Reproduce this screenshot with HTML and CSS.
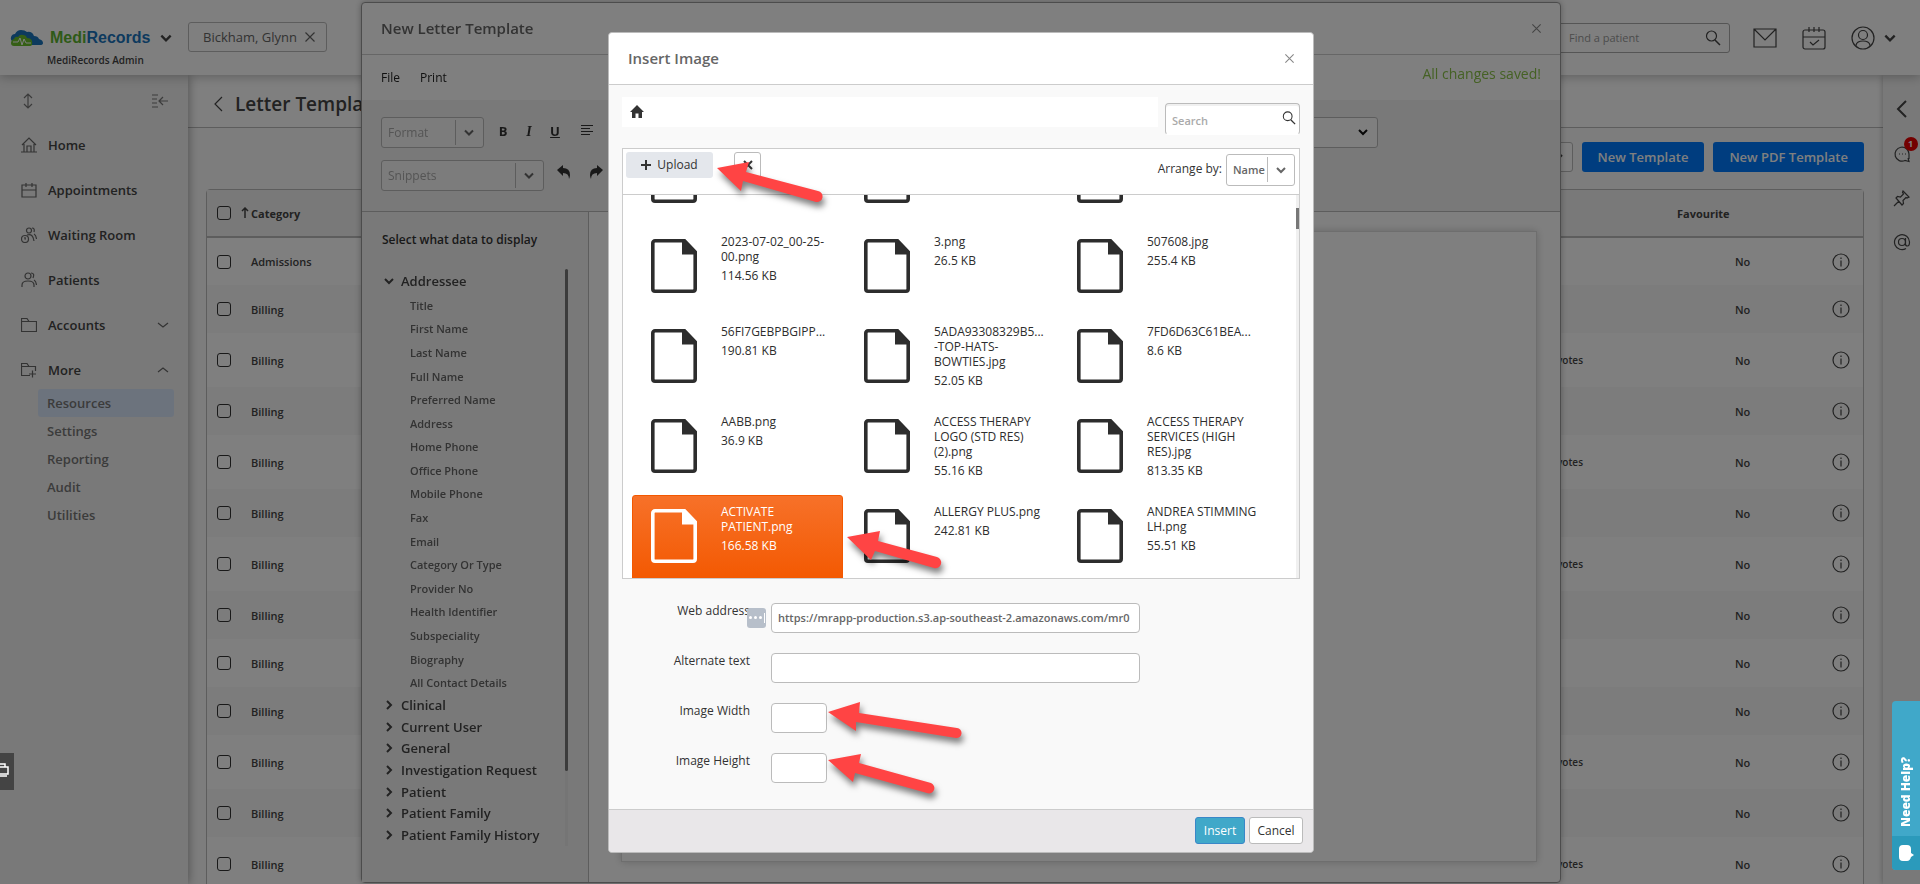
FILE: index.html
```html
<!DOCTYPE html>
<html lang="en">

<head>
  <meta charset="UTF-8">
  <meta name="viewport" content="width=device-width, initial-scale=1.0">
  <title>MediRecords - Letter Templates</title>
  <link rel="stylesheet" href="styles.css">
</head>

<body>
  <!-- shared icons -->
  <svg class="defs" width="0" height="0">
    <symbol id="i-down" viewBox="0 0 12 12"><path d="M2 4l4 4 4-4" fill="none" stroke="currentColor" stroke-width="2"/></symbol>
    <symbol id="i-close" viewBox="0 0 12 12"><path d="M1.500 1.500l9 9M10.500 1.500l-9 9" fill="none" stroke="currentColor" stroke-width="1.200"/></symbol>
    <symbol id="i-info" viewBox="0 0 18 18"><circle cx="9" cy="9" r="8" fill="none" stroke="currentColor" stroke-width="1.200"/><path d="M9 7.500v6M9 4.500v1.500" stroke="currentColor" stroke-width="1.200"/></symbol>
    <symbol id="i-search" viewBox="0 0 16 16"><circle cx="6.500" cy="6" r="5" fill="none" stroke="currentColor" stroke-width="1.200"/><path d="M10 10l5 5" stroke="currentColor" stroke-width="1.500"/></symbol>
    <symbol id="i-file" viewBox="0 0 46 54">
      <path d="M4 1.800h29.500L44.200 13v37a2.200 2.200 0 0 1-2.200 2.200H4A2.200 2.200 0 0 1 1.800 50V4A2.200 2.200 0 0 1 4 1.800z" fill="none" stroke="currentColor" stroke-width="3.600"/>
      <path d="M31 2h3l10 10v3.500H31z" fill="currentColor"/>
    </symbol>
  </svg>

  <header class="header">
    <div class="brand">
      <div class="brand-top">
        <svg class="cloud" width="34" height="18" viewBox="0 0 34 18">
          <path d="M4 13Q0 12 1 8q1-3 4-3Q7 1 11 1q4 0 6 2 5-1 7 4 4 0 5 3 4 1 4 4 0 2-3 2H14z" fill="#1b75bc"/>
          <path d="M4 17q-3 0-3-3t3-4q1-3 4-2 2-3 5-2 3 0 4 3 4 0 5 3 1 5-2 5z" fill="#6abf2a"/>
          <path d="M3 13h5l2-4 2 7 2-6 2 4h5" fill="none" stroke="#fff"/>
        </svg>
        <a href="#" class="logo"><span>Medi</span>Records</a>
        <svg width="14" height="14"><use href="#i-down"/></svg>
      </div>
      <small>MediRecords Admin</small>
    </div>
    <div class="patient-tag">Bickham, Glynn <svg width="12" height="12"><use href="#i-close"/></svg></div>
    <div class="find">
      <input type="text" placeholder="Find a patient" aria-label="Find a patient">
      <svg width="16" height="16"><use href="#i-search"/></svg>
    </div>
    <div class="header-icons">
      <svg width="24" height="20" viewBox="0 0 24 20" class="line"><path d="M1 1h22v18H1zM1 1l11 11L23 1"/></svg>
      <svg width="24" height="24" viewBox="0 0 24 24" class="line"><rect x="1" y="4" width="22" height="19" rx="2"/><path d="M1 11h22M7 1v5M12 1v5M17 1v5M8 16l3 3 6-5"/></svg>
      <span class="user">
        <svg width="24" height="24" viewBox="0 0 24 24" class="line"><circle cx="12" cy="12" r="11"/><circle cx="12" cy="9" r="4.500"/><path d="M5 20v-1q1-4 7-4t7 4v1"/></svg>
        <svg width="14" height="14"><use href="#i-down"/></svg>
      </span>
    </div>
  </header>

  <div class="shell">
    <nav class="sidebar">
      <div class="sidebar-tools">
        <svg width="10" height="16" viewBox="0 0 10 16" class="line"><path d="M5 1v14M1 5l4-4 4 4M1 11l4 4 4-4"/></svg>
        <svg width="16" height="14" viewBox="0 0 16 14" class="line"><path d="M0 1h6M0 5h5M0 9h5M0 13h6M7 7h9M11 3L7 7l4 4"/></svg>
      </div>
      <ul class="menu">
        <li><a href="#"><svg width="16" height="16" viewBox="0 0 16 16" class="line"><path d="M1 8l7-7 7 7M3 7v8M13 7v8M0 15h16M6 15V9h4v6"/></svg>Home</a></li>
        <li><a href="#"><svg width="16" height="16" viewBox="0 0 16 16" class="line"><path d="M1 3h14v12H1zM1 8h14M5 1v4M11 1v4"/></svg>Appointments</a></li>
        <li><a href="#"><svg width="16" height="16" viewBox="0 0 16 16" class="line"><circle cx="8" cy="3.500" r="2.500"/><circle cx="4" cy="12" r="3.500"/><path d="M4 10v2h1M6 8q6-2 7 6M11 1q3 0 2 4M13 7q2 1 2.500 5"/></svg>Waiting Room</a></li>
        <li><a href="#"><svg width="16" height="16" viewBox="0 0 16 16" class="line"><circle cx="7" cy="4" r="3"/><path d="M1 15v-2q0-4 6-4t6 4v2M10 1q4 0 2 5M13 8q2 1 2.500 5"/></svg>Patients</a></li>
        <li><a href="#"><svg width="16" height="16" viewBox="0 0 16 16" class="line"><path d="M.5 14.500V1.500H6l2 3h7.500v10zM1 4.500h7"/></svg>Accounts<svg class="toggle line" width="12" height="12" viewBox="0 0 12 12"><path d="M1 4l5 4 5-4"/></svg></a></li>
        <li><a href="#"><svg width="16" height="16" viewBox="0 0 16 16" class="line"><path d="M9 13.500H.5V1.500H6l2 3h6.500V9M1 4.500h7M11.500 8.500v7M8 12h7"/></svg>More<svg class="toggle line" width="12" height="12" viewBox="0 0 12 12"><path d="M1 8l5-4 5 4"/></svg></a></li>
      </ul>
      <ul class="submenu">
        <li><a href="#" class="active">Resources</a></li>
        <li><a href="#">Settings</a></li>
        <li><a href="#">Reporting</a></li>
        <li><a href="#">Audit</a></li>
        <li><a href="#">Utilities</a></li>
      </ul>
    </nav>

    <main class="main">
      <h1 class="page-title">
        <svg width="10" height="16" viewBox="0 0 10 16" class="line"><path d="M9 1L2 8l7 7"/></svg>
        Letter Templates
      </h1>
      <div class="actions">
        <div class="combo wide">
          <select aria-label="Status"><option>Active</option></select>
          <svg width="12" height="12"><use href="#i-down"/></svg>
        </div>
        <button class="primary">New Template</button>
        <button class="primary">New PDF Template</button>
      </div>
      <div class="grid-box">
        <table class="grid">
          <colgroup>
            <col class="c-check"><col><col class="c-name"><col class="c-fav"><col class="c-info">
          </colgroup>
          <thead>
            <tr>
              <th><input type="checkbox" aria-label="Select all"></th>
              <th class="category"><svg width="8" height="12" viewBox="0 0 8 12"><path d="M4 11V1M1 4l3-3 3 3" fill="none" stroke="currentColor" stroke-width="1.500"/></svg>Category</th>
              <th></th>
              <th>Favourite</th>
              <th></th>
            </tr>
          </thead>
          <tbody id="templates"></tbody>
        </table>
      </div>
    </main>

    <aside class="rail">
      <svg width="12" height="20" viewBox="0 0 12 20" class="line thick"><path d="M10 2l-8 8 8 8"/></svg>
      <span class="chat">
        <svg width="18" height="18" viewBox="0 0 18 18" class="line"><path d="M16 14V9a7 7 0 1 0-4 6.500l4 1-1-3.500M6 9h1M9 9h1M12 9h1"/></svg>
        <b class="badge">1</b>
      </span>
      <svg width="18" height="18" viewBox="0 0 18 18" class="line"><path d="M10 2l6 6-2 1-1-.5-3 3 .5 3-1.500 1.500L3 9l1.500-1.500 3 .5 3-3L9.500 3.500zM6 12l-5 5"/></svg>
      <svg width="18" height="18" viewBox="0 0 18 18" class="line"><circle cx="9" cy="9" r="3.500"/><path d="M12.500 5v6q0 2 2 2t2-4a7.500 7.500 0 1 0-3.500 6.500"/></svg>
    </aside>
  </div>

  <div class="layer">
    <section class="window">
      <div class="window-head">
        <h2>New Letter Template</h2>
        <button class="close" aria-label="Close"><svg width="11" height="11"><use href="#i-close"/></svg></button>
      </div>
      <div class="window-menu">
        <a href="#">File</a>
        <a href="#">Print</a>
        <span class="saved">All changes saved!</span>
      </div>
      <div class="editor-tools">
        <div class="tool-row">
          <div class="combo divided format">
            <select aria-label="Format"><option>Format</option></select>
            <svg width="12" height="12"><use href="#i-down"/></svg>
          </div>
          <button class="tool" aria-label="Bold"><b>B</b></button>
          <button class="tool" aria-label="Italic"><i>I</i></button>
          <button class="tool" aria-label="Underline"><u>U</u></button>
          <button class="tool align" aria-label="Align left"><svg width="12" height="12" viewBox="0 0 12 12" class="line"><path d="M0 1.500h12M0 4.500h9M0 7.500h12M0 10.500h9"/></svg></button>
          <div class="combo wide last">
            <select aria-label="Field"><option></option></select>
            <svg width="12" height="12"><use href="#i-down"/></svg>
          </div>
        </div>
        <div class="tool-row">
          <div class="combo divided snippets">
            <select aria-label="Snippets"><option>Snippets</option></select>
            <svg width="12" height="12"><use href="#i-down"/></svg>
          </div>
          <button class="tool undo" aria-label="Undo"><svg width="14" height="14" viewBox="0 0 14 14"><path d="M0 5l6-5v3q7 0 7 7 0 2-1 4 0-6-6-6v3z" fill="currentColor"/></svg></button>
          <button class="tool" aria-label="Redo"><svg width="14" height="14" viewBox="0 0 14 14"><path d="M14 5L8 0v3q-7 0-7 7 0 2 1 4 0-6 6-6v3z" fill="currentColor"/></svg></button>
        </div>
      </div>
      <div class="window-body">
        <div class="fields">
          <h3>Select what data to display</h3>
          <div class="tree">
            <div class="tree-list">
              <div class="node open"><svg width="12" height="12"><use href="#i-down"/></svg>Addressee</div>
              <ul class="leaves" id="leaves"></ul>
              <div class="groups" id="groups"></div>
            </div>
            <div class="track"><div class="thumb"></div></div>
          </div>
        </div>
        <div class="canvas"><div class="sheet"></div></div>
      </div>
    </section>
  </div>

  <div class="layer shade">
    <section class="dialog" role="dialog" aria-label="Insert Image">
      <div class="dialog-head">
        <h2>Insert Image</h2>
        <button class="close" aria-label="Close"><svg width="11" height="11"><use href="#i-close"/></svg></button>
      </div>
      <div class="dialog-body">
        <div class="browse-top">
          <div class="crumbs"><svg width="14" height="13" viewBox="0 0 14 13"><path d="M7 0l7 7h-2v6H8.500V8.500h-3V13H2V7H0z" fill="currentColor"/></svg></div>
          <div class="search">
            <input type="text" placeholder="Search" aria-label="Search">
            <svg width="14" height="14"><use href="#i-search"/></svg>
          </div>
        </div>
        <div class="browser">
          <div class="browser-tools">
            <button class="upload"><svg width="10" height="10" viewBox="0 0 10 10"><path d="M5 0v10M0 5h10" stroke="currentColor" stroke-width="2"/></svg>Upload</button>
            <button class="delete" aria-label="Delete"><svg width="10" height="10" viewBox="0 0 10 10"><path d="M1 1l8 8M9 1L1 9" stroke="currentColor" stroke-width="2"/></svg></button>
            <label for="arrange">Arrange by:</label>
            <div class="combo divided arrange">
              <select id="arrange"><option>Name</option></select>
              <svg width="12" height="12"><use href="#i-down"/></svg>
            </div>
          </div>
          <div class="browser-list">
            <ul class="files" id="files"></ul>
            <div class="list-track"><div class="list-thumb"></div></div>
          </div>
        </div>
        <form class="form">
          <label for="url">Web address</label>
          <span class="url-box"><i class="filler"><b></b><b></b><b></b><em></em></i><input id="url" type="text" value="https://mrapp-production.s3.ap-southeast-2.amazonaws.com/mr0"></span>
          <label for="alt">Alternate text</label>
          <input id="alt" type="text">
          <label for="w">Image Width</label>
          <input id="w" type="text" class="short">
          <label for="h">Image Height</label>
          <input id="h" type="text" class="short">
        </form>
      </div>
      <div class="dialog-foot">
        <button class="insert">Insert</button>
        <button class="cancel">Cancel</button>
      </div>
      <svg class="pointers" viewBox="608 32 706 821" preserveAspectRatio="xMinYMin">
        <path d="M717 168L749 162L746 172L818 191A5.500 5.500 0 0 1 816 202L743 181L741 191z"/>
        <path d="M847 537L880 531L878 541L937 557A5.500 5.500 0 0 1 934 568L875 551L871 560z"/>
        <path d="M828 712L860 702L859 713L957 728A5 5 0 0 1 956 738L856 722L856 731z"/>
        <path d="M828 760L861 754L859 763L931 783A5 5 0 0 1 927 793L855 773L853 782z"/>
      </svg>
    </section>
  </div>

  <button class="side-tab" aria-label="Print"><svg width="10" height="14" viewBox="0 0 10 14"><path d="M0 1h5v3M0 4h8v7H0M0 13h7" fill="none" stroke="#fff" stroke-width="1.500"/></svg></button>
  <button class="help">
    <span class="help-text">Need Help?</span>
    <span class="help-icon"><svg width="16" height="16" viewBox="0 0 16 16"><path d="M5 0h4q4 0 4 4v4l3 2-3 2q-1 4-4 4H5q-4 0-4-4V4q0-4 4-4z" fill="#fff"/></svg></span>
  </button>

  <script>
    const templates = [
      ["Admissions", ""], ["Billing", ""], ["Billing", "votes"], ["Billing", ""],
      ["Billing", "votes"], ["Billing", ""], ["Billing", "votes"], ["Billing", ""],
      ["Billing", ""], ["Billing", ""], ["Billing", "votes"], ["Billing", ""], ["Billing", "votes"],
    ];
    document.getElementById("templates").innerHTML = templates.map(([category, name]) => `
      <tr class="${name ? "tall" : ""}">
        <td><input type="checkbox" aria-label="Select ${category}"></td>
        <td class="category">${category}</td>
        <td class="name">${name}</td>
        <td class="fav">No</td>
        <td><svg width="18" height="18"><use href="#i-info"/></svg></td>
      </tr>`).join("");

    const leaves = ["Title", "First Name", "Last Name", "Full Name", "Preferred Name", "Address",
      "Home Phone", "Office Phone", "Mobile Phone", "Fax", "Email", "Category Or Type",
      "Provider No", "Health Identifier", "Subspeciality", "Biography", "All Contact Details"];
    document.getElementById("leaves").innerHTML = leaves.map(l => `<li>${l}</li>`).join("");

    const groups = ["Clinical", "Current User", "General", "Investigation Request", "Patient",
      "Patient Family", "Patient Family History"];
    document.getElementById("groups").innerHTML = groups.map(g =>
      `<div class="node"><svg width="12" height="12"><use href="#i-down"/></svg>${g}</div>`).join("");

    // the first row is scrolled mostly out of view
    const files = [
      ["", ""], ["", ""], ["", ""],
      ["2023-07-02_00-25-<br>00.png", "114.56 KB"],
      ["3.png", "26.5 KB"],
      ["507608.jpg", "255.4 KB"],
      ["56FI7GEBPBGIPP...", "190.81 KB"],
      ["5ADA93308329B5...<br>-TOP-HATS-<br>BOWTIES.jpg", "52.05 KB"],
      ["7FD6D63C61BEA...", "8.6 KB"],
      ["AABB.png", "36.9 KB"],
      ["ACCESS THERAPY<br>LOGO (STD RES)<br>(2).png", "55.16 KB"],
      ["ACCESS THERAPY<br>SERVICES (HIGH<br>RES).jpg", "813.35 KB"],
      ["ACTIVATE<br>PATIENT.png", "166.58 KB"],
      ["ALLERGY PLUS.png", "242.81 KB"],
      ["ANDREA STIMMING<br>LH.png", "55.51 KB"],
    ];
    document.getElementById("files").innerHTML = files.map(([name, size]) => `
      <li class="${name.startsWith("ACTIVATE") ? "selected" : ""}">
        <svg width="46" height="54"><use href="#i-file"/></svg>
        <div><strong>${name}</strong><span>${size}</span></div>
      </li>`).join("");
  </script>
</body>

</html>
```
FILE: styles.css
```css
* {
  box-sizing: border-box;
}

body {
  margin: 0;
  height: 100vh;
  display: flex;
  flex-direction: column;
  overflow: hidden;
  background: #fff;
  color: #444;
  font-family: "Open Sans", "Noto Sans", sans-serif;
  font-size: 12px;
}

h1,
h2,
h3 {
  margin: 0;
  font-weight: 600;
}

ul {
  margin: 0;
  padding: 0;
  list-style: none;
}

a {
  color: inherit;
  text-decoration: none;
}

button,
input,
select {
  font: inherit;
  color: inherit;
}

button {
  padding: 0;
  border: none;
  background: none;
  cursor: pointer;
}

svg {
  flex-shrink: 0;
}

.defs {
  position: absolute;
}

.line {
  fill: none;
  stroke: currentColor;
  stroke-width: 1.2;
}

.thick {
  stroke-width: 2;
}

/* header */
.header {
  position: relative;
  z-index: 2;
  height: 75px;
  flex-shrink: 0;
  display: flex;
  align-items: center;
  padding: 0 23px 0 10px;
  background: #fff;
  box-shadow: 0 2px 10px rgba(0, 0, 0, 0.25);
}

.brand {
  width: 178px;
  padding-top: 22px;
}

.brand-top {
  display: flex;
  align-items: center;
  gap: 6px;
  height: 22px;
}

.brand-top > svg:last-child {
  margin-left: 2px;
}

.logo {
  width: 101px;
  color: #1b75bc;
  font: bold 16px "Liberation Sans", sans-serif;
}

.logo span {
  color: #5cb531;
}

.brand small {
  display: block;
  padding-left: 37px;
  font-size: 10px;
  font-weight: 600;
  line-height: 22px;
}

.patient-tag {
  display: flex;
  align-items: center;
  gap: 7px;
  height: 30px;
  margin-bottom: 2px;
  padding: 0 10px 0 14px;
  border: 1px solid #bbb;
  border-radius: 3px;
  font-size: 13px;
  color: #666;
}

.find {
  display: flex;
  align-items: center;
  width: 180px;
  height: 30px;
  margin-left: auto;
  padding-right: 8px;
  border: 1px solid #aaa;
  border-radius: 3px;
}

.find input {
  width: 100%;
  padding: 0 0 0 18px;
  border: none;
  background: none;
  font-size: 11px;
}

.find input::placeholder {
  color: #999;
}

.header-icons {
  display: flex;
  align-items: center;
  gap: 25px;
  margin-left: 23px;
}

.user {
  display: flex;
  align-items: center;
  gap: 8px;
}

/* page */
.shell {
  flex: 1;
  min-height: 0;
  display: flex;
}

.sidebar {
  position: relative;
  z-index: 1;
  width: 188px;
  flex-shrink: 0;
  background: #f2f2f2;
  box-shadow: 0 0 10px rgba(0, 0, 0, 0.4);
  font-size: 13px;
  font-weight: 600;
}

.sidebar-tools {
  display: flex;
  justify-content: space-between;
  align-items: center;
  height: 47px;
  padding: 4px 20px 0 23px;
  color: #777;
}

.menu a {
  display: flex;
  align-items: center;
  gap: 11px;
  height: 45px;
  padding: 0 19px 0 21px;
}

.menu svg {
  color: #666;
}

.menu .toggle {
  margin-left: auto;
}

.submenu {
  margin-top: -3px;
}

.submenu a {
  display: block;
  margin: 0 14px 0 38px;
  padding: 0 9px;
  border-radius: 3px;
  line-height: 28px;
  color: #777;
}

.submenu .active {
  background: #d9e7fb;
}

.main {
  flex: 1;
  min-width: 0;
  overflow: hidden;
  background: #fbfbfb;
}

.page-title {
  display: flex;
  align-items: center;
  gap: 12px;
  height: 53px;
  padding: 6px 25px 0;
  border-bottom: 1px solid #bbb;
  background: #fff;
  font-size: 19px;
}

.actions {
  display: flex;
  justify-content: flex-end;
  gap: 9px;
  padding: 14px 19px 17px;
}

.primary {
  height: 30px;
  padding: 0 16px;
  border-radius: 3px;
  background: #007bff;
  color: #fff;
  font-size: 13px;
  font-weight: 600;
}

.combo {
  display: grid;
  grid-template-columns: 1fr 28px;
  align-items: center;
  justify-items: center;
  height: 31px;
  border: 1px solid #bbb;
  border-radius: 3px;
}

.combo select {
  grid-area: 1 / 1 / 2 / 3;
  width: 100%;
  height: 100%;
  padding: 0 28px 0 6px;
  border: none;
  background: none;
  appearance: none;
}

.combo svg {
  grid-area: 1 / 2 / 2 / 3;
  pointer-events: none;
}

.divided svg {
  width: 28px;
  height: 100%;
  padding: 0 8px;
  background: linear-gradient(#bbb, #bbb) left center / 1px 25px no-repeat;
}

.actions .combo {
  width: 160px;
  height: 30px;
  background: #fff;
}

.grid-box {
  margin: 0 19px 0 18px;
  border: 1px solid #bbb;
  border-radius: 4px;
}

.grid {
  width: 100%;
  table-layout: fixed;
  border-collapse: collapse;
  font-size: 11px;
}

.c-check {
  width: 44px;
}

.c-name {
  width: 300px;
}

.c-fav {
  width: 160px;
}

.c-info {
  width: 42px;
}

.grid th {
  height: 47px;
  padding: 0;
  border-bottom: 2px solid #bbb;
  background: #f3f3f3;
  text-align: left;
}

.grid th:nth-child(4) {
  padding-left: 16px;
}

.grid th svg {
  margin: 0 2px 0 -10px;
  vertical-align: -1px;
}

.grid td {
  height: 48px;
  padding: 0;
  font-weight: 600;
}

.grid .tall td {
  height: 54px;
}

.grid tbody tr {
  background: #fff;
}

.grid tbody tr:nth-child(even) {
  background: #f8f8f8;
}

.grid td svg {
  display: block;
  margin-left: 11px;
}

.grid .name {
  padding-right: 78px;
  text-align: right;
  font-size: 10px;
}

.grid .fav {
  padding-left: 74px;
}

.grid input {
  display: block;
  width: 14px;
  height: 14px;
  margin: 0 0 0 10px;
  border: 1px solid #333;
  border-radius: 3px;
  appearance: none;
}

.rail {
  display: flex;
  flex-direction: column;
  align-items: center;
  gap: 26px;
  width: 37px;
  flex-shrink: 0;
  padding-top: 24px;
  background: #f3f3f3;
  box-shadow: 0 0 6px rgba(0, 0, 0, 0.3);
}

.chat {
  position: relative;
  height: 18px;
}

.badge {
  position: absolute;
  top: -8px;
  right: -7px;
  width: 14px;
  height: 14px;
  border-radius: 50%;
  background: #e60000;
  color: #fff;
  font-size: 9px;
  line-height: 14px;
  text-align: center;
}

/* letter template window */
.layer {
  position: fixed;
  inset: 0;
  z-index: 3;
  display: flex;
  justify-content: center;
  align-items: center;
  padding-left: 2px;
}

.shade {
  background: rgba(0, 0, 0, 0.5);
}

.window {
  display: flex;
  flex-direction: column;
  width: 1200px;
  max-width: 96%;
  height: calc(100% - 3px);
  border: 1px solid #999;
  border-radius: 4px;
  background: #fff;
  box-shadow: 0 0 6px rgba(0, 0, 0, 0.3);
}

.window-head,
.dialog-head {
  display: flex;
  justify-content: space-between;
  align-items: center;
  height: 52px;
  padding: 0 18px 0 19px;
  border-bottom: 1px solid #ccc;
}

.window-head h2,
.dialog-head h2 {
  font-size: 15px;
  color: #666;
}

.close {
  display: flex;
  color: #888;
}

.window-menu {
  display: flex;
  align-items: center;
  gap: 20px;
  height: 45px;
  padding: 0 19px;
  color: #222;
  font-weight: 500;
}

.saved {
  margin: 0 0 8px auto;
  color: #8bc34a;
  font-size: 14px;
  font-weight: 400;
}

.editor-tools {
  display: flex;
  flex-direction: column;
  gap: 12px;
  height: 112px;
  padding: 17px 19px 0;
  border-bottom: 1px solid #bbb;
  background: #f3f3f3;
}

.tool-row {
  display: flex;
  align-items: center;
  height: 31px;
}

.tool-row .combo {
  background: #f8f8f8;
  color: #666;
}

.tool-row .combo select {
  color: #aaa;
}

.format {
  width: 103px;
  margin-right: 6px;
}

.snippets {
  width: 163px;
  margin-right: 7px;
}

.last {
  width: 225px;
  margin-left: auto;
  margin-right: 163px;
}

.tool-row .last {
  background: #fff;
  color: #111;
}

.tool {
  width: 26px;
  height: 26px;
  margin-bottom: 2px;
  color: #333;
  font-size: 13px;
}

.tool i {
  font-family: "Liberation Serif", serif;
  font-weight: bold;
  font-size: 14px;
}

.tool u {
  font-weight: bold;
}

.align {
  margin-left: 6px;
}

.undo {
  margin-right: 6px;
}

.window-body {
  flex: 1;
  min-height: 0;
  display: flex;
}

.fields {
  display: flex;
  flex-direction: column;
  width: 227px;
  padding: 16px 20px 34px 20px;
  border-right: 1px solid #bbb;
  background: #f3f3f3;
}

.fields h3 {
  height: 41px;
  color: #333;
  font-size: 12px;
  line-height: 24px;
}

.tree {
  flex: 1;
  min-height: 0;
  display: flex;
  justify-content: space-between;
}

.tree-list {
  font-weight: 600;
}

.node {
  display: flex;
  align-items: center;
  gap: 10px;
  font-size: 13px;
}

.open {
  height: 25px;
}

.node svg {
  margin-left: 1px;
  margin-right: -4px;
}

.leaves {
  display: grid;
  grid-auto-rows: 1fr;
  align-items: center;
  height: 401px;
  padding-left: 28px;
  color: #666;
  font-size: 11px;
}

.groups {
  display: grid;
  grid-auto-rows: 1fr;
  align-items: center;
  height: 151px;
  white-space: nowrap;
}

.groups svg {
  transform: rotate(-90deg);
}

.track {
  width: 3px;
  height: 577px;
  background: #eaeaea;
}

.thumb {
  height: 502px;
  border-radius: 2px;
  background: #777;
}

.canvas {
  flex: 1;
  padding: 19px 23px 20px 32px;
}

.sheet {
  height: 100%;
  border: 1px solid #ddd;
  box-shadow: 0 0 8px rgba(0, 0, 0, 0.2);
}

/* insert image dialog */
.dialog {
  position: relative;
  width: 706px;
  max-width: 96%;
  border: 1px solid #bbb;
  border-radius: 4px;
  background: #f9f9f9;
  color: #333;
}

.dialog-head {
  border-radius: 4px 4px 0 0;
  background: #fff;
}

.dialog-body {
  padding: 12px 13px 26px 13px;
}

.browse-top {
  display: flex;
  gap: 7px;
  height: 51px;
}

.crumbs {
  flex: 1;
  height: 30px;
  padding: 8px;
  background: #fff;
}

.search {
  display: flex;
  align-items: center;
  width: 135px;
  height: 32px;
  margin-top: 6px;
  padding: 0 3px 2px 0;
  border: 1px solid #bbb;
  border-bottom-color: #fff;
  border-radius: 4px;
  background: #fff;
  box-shadow: inset 0 2px #f0f0f0;
}

.search input {
  width: 100%;
  padding: 6px 0 0 6px;
  border: none;
  background: none;
  font-size: 11px;
}

.search input::placeholder {
  color: #aaa;
  font-weight: 600;
}

.browser {
  border: 1px solid #ccc;
}

.browser-tools {
  display: flex;
  height: 46px;
  padding: 3px 4px 0 3px;
  border-bottom: 1px solid #ccc;
  background: #fff;
}

.upload {
  display: flex;
  align-items: center;
  justify-content: center;
  gap: 6px;
  width: 87px;
  height: 26px;
  border-radius: 3px;
  background: #e4e7ec;
}

.delete {
  width: 27px;
  height: 27px;
  margin-left: 21px;
  border: 1px solid #bbb;
  border-radius: 3px;
}

.browser-tools label {
  margin: 0 4px 0 auto;
  font-weight: 500;
  line-height: 34px;
}

.arrange {
  grid-template-columns: 1fr 27px;
  width: 69px;
  height: 32px;
  margin-top: 2px;
  color: #666;
}

.arrange select {
  padding-right: 0;
  font-size: 11px;
  font-weight: 600;
}

.browser-list {
  display: flex;
  height: 383px;
  overflow: hidden;
  background: #fff;
}

.files {
  flex: 1;
  display: grid;
  grid-template-columns: repeat(3, 1fr);
  grid-auto-rows: 88px;
  gap: 2px;
  margin-top: -60px;
  padding: 0 27px 0 9px;
}

.files li {
  display: flex;
  gap: 24px;
  padding: 14px 0 0 19px;
  border-radius: 3px;
  color: #2d2d2d;
}

.files li div {
  margin-top: -5px;
}

.files strong {
  display: block;
  margin-bottom: 3px;
  font-weight: 400;
  line-height: 15px;
  white-space: nowrap;
}

.files span {
  line-height: 16px;
}

.files .selected {
  border: 1px solid #f35800;
  background: linear-gradient(#f77129, #f35800);
  color: #fff;
  padding: 13px 0 0 18px;
}

.list-track {
  width: 3px;
  padding-top: 13px;
  background: #f0f0f0;
}

.list-thumb {
  height: 21px;
  background: #777;
}

.form {
  display: grid;
  grid-template-columns: 128px 369px;
  gap: 20px 21px;
  padding-top: 24px;
}

.form label {
  font-weight: 500;
  line-height: 16px;
  text-align: right;
}

.form input {
  width: 100%;
  height: 30px;
  padding: 0 0 0 6px;
  border: 1px solid #bbb;
  border-radius: 4px;
  background: #fff;
  color: #666;
  font-size: 11px;
  font-weight: 600;
}

.form .short {
  width: 56px;
}

.url-box {
  position: relative;
}

.filler {
  position: absolute;
  top: 5px;
  left: -24px;
  display: flex;
  align-items: center;
  justify-content: center;
  gap: 2px;
  width: 19px;
  height: 20px;
  border-radius: 3px;
  background: #b7bfca;
}

.filler b {
  width: 3px;
  height: 3px;
  border-radius: 50%;
  background: #fff;
}

.filler em {
  width: 1px;
  height: 10px;
  background: #fff;
}

.dialog-foot {
  display: flex;
  justify-content: flex-end;
  gap: 4px;
  height: 43px;
  padding: 7px 10px;
  border-top: 1px solid #ccc;
  border-radius: 0 0 4px 4px;
  background: #e9e7e9;
}

.insert,
.cancel {
  width: 50px;
  height: 27px;
  border: 1px solid #3a87c8;
  border-radius: 3px;
  background: #40a8c9;
  color: #fff;
}

.cancel {
  width: 54px;
  border-color: #bbb;
  background: #fff;
  color: #333;
}

.pointers {
  position: absolute;
  top: -1px;
  left: -1px;
  width: 706px;
  height: 821px;
  fill: #ff4444;
  filter: drop-shadow(2px 5px 3px rgba(0, 0, 0, 0.5));
  pointer-events: none;
}

/* floating tabs */
.side-tab {
  position: fixed;
  left: 0;
  top: 753px;
  z-index: 4;
  width: 14px;
  height: 37px;
  background: #444;
  text-align: left;
}

.help {
  position: fixed;
  right: 0;
  bottom: 14px;
  z-index: 4;
  display: flex;
  flex-direction: column;
  width: 28px;
  height: 169px;
  overflow: hidden;
  border-radius: 4px 0 0 4px;
  background: #40a8c9;
  color: #fff;
}

.help-text {
  flex: 1;
  width: 28px;
  padding-top: 9px;
  font-weight: 800;
  line-height: 28px;
  text-align: left;
  writing-mode: vertical-rl;
  transform: rotate(180deg);
}

.help-icon {
  display: flex;
  justify-content: center;
  align-items: center;
  width: 28px;
  height: 34px;
  background: #2b9abb;
}
```
